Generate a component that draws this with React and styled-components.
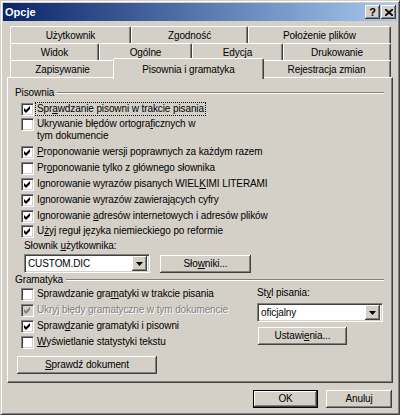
import styled, { createGlobalStyle } from 'styled-components';

const Global = createGlobalStyle`
  html, body { margin: 0; padding: 0; background: #d4d0c8; }
  body {
    font-family: "Liberation Sans", Arial, sans-serif;
    font-size: 10px;
    letter-spacing: -0.1px;
    color: #000;
  }
`;

const Window = styled.div`
  width: 400px;
  height: 415px;
  box-sizing: border-box;
  background: #d4d0c8;
  border: 1px solid;
  border-color: #d4d0c8 #404040 #404040 #d4d0c8;
  box-shadow: inset 1px 1px #fff, inset -1px -1px #808080;
  padding: 2px;
  display: flex;
  flex-direction: column;
`;

const TitleBar = styled.div`
  height: 18px;
  display: flex;
  align-items: center;
  padding: 0 1px 0 2px;
  background: linear-gradient(to right, #0a246a, #a6caf0);
  color: #fff;
  font-weight: bold;
  font-size: 11px;
  letter-spacing: 0;
`;

const TitleText = styled.span`
  flex: 1;
`;

const TitleButton = styled.div`
  width: ${(p) => p.w}px;
  height: 14px;
  margin-left: ${(p) => p.gap || 0}px;
  box-sizing: border-box;
  background: #d4d0c8;
  box-shadow: inset -1px -1px #404040, inset 1px 1px #fff, inset -2px -2px #808080;
  color: #000;
  display: flex;
  align-items: center;
  justify-content: center;
  font-size: 11px;
  font-weight: bold;
  line-height: 14px;
`;

const Body = styled.div`
  padding: 0 4px;
  display: flex;
  flex-direction: column;
`;

const Tabs = styled.div`
  margin: 5px 2px 0 3px;
  display: flex;
  flex-direction: column;
`;

const TabRow = styled.div`
  display: flex;
  height: 17px;
  align-items: flex-start;
`;

const Tab = styled.div`
  position: relative;
  z-index: ${(p) => (p.active ? 2 : 0)};
  box-sizing: border-box;
  width: ${(p) => p.w + (p.active ? 4 : 0)}px;
  height: ${(p) => (p.active ? 21 : 17)}px;
  margin: ${(p) => (p.active ? '-2px -2px 0' : '0')};
  padding-top: ${(p) => (p.active ? 5 : 3)}px;
  background: #d4d0c8;
  border-top: 1px solid #fff;
  border-left: 1px solid #fff;
  border-right: 1px solid #404040;
  border-radius: 2px 2px 0 0;
  box-shadow: inset -1px 0 #808080;
  text-align: center;
  line-height: 12px;
  white-space: nowrap;
`;

const Panel = styled.div`
  height: 306px;
  box-sizing: border-box;
  border: 1px solid;
  border-color: #fff #404040 #404040 #fff;
  box-shadow: inset -1px -1px #808080;
  padding: 0 8px 0 7px;
  display: flex;
  flex-direction: column;
`;

const GroupHeader = styled.div`
  display: flex;
  align-items: center;
  height: 12px;
  line-height: 12px;
  margin-top: ${(p) => p.mt}px;
`;

const GroupLine = styled.div`
  flex: 1;
  margin-left: 3px;
  border-top: 1px solid #808080;
  border-bottom: 1px solid #fff;
`;

const CheckList = styled.div`
  display: flex;
  flex-direction: column;
  padding-left: 6px;
  margin-top: ${(p) => p.mt || 0}px;
`;

const CheckRow = styled.div`
  display: flex;
  align-items: ${(p) => (p.multi ? 'flex-start' : 'center')};
  height: ${(p) => p.h || 16}px;
  padding-top: ${(p) => (p.multi ? 1 : 0)}px;
  box-sizing: border-box;
  color: ${(p) => (p.disabled ? '#808080' : '#000')};
  text-shadow: ${(p) => (p.disabled ? '1px 1px #fff' : 'none')};
`;

const Box = styled.div`
  width: 13px;
  height: 13px;
  flex: none;
  box-sizing: border-box;
  margin-right: 2px;
  background: ${(p) => (p.disabled ? '#d4d0c8' : '#fff')};
  border: 1px solid;
  border-color: #808080 #fff #fff #808080;
  box-shadow: inset 1px 1px #404040, inset -1px -1px #d4d0c8;
  display: flex;
  align-items: center;
  justify-content: center;
  text-shadow: none;
`;

const Label = styled.span`
  line-height: 12px;
  white-space: nowrap;
  padding: 0 1px;
  outline: ${(p) => (p.focus ? '1px dotted #000' : 'none')};
`;

const Key = styled.span`
  text-decoration: underline;
`;

const FieldLabel = styled.div`
  line-height: 12px;
  margin-top: ${(p) => p.mt || 0}px;
  padding-left: ${(p) => p.pl || 0}px;
`;

const FieldRow = styled.div`
  display: flex;
  align-items: center;
  gap: 10px;
  height: 19px;
  margin-top: 2px;
  padding-left: 9px;
`;

const Combo = styled.div`
  width: ${(p) => p.w}px;
  height: 19px;
  margin-top: ${(p) => p.mt || 0}px;
  box-sizing: border-box;
  background: #fff;
  border: 1px solid;
  border-color: #808080 #fff #fff #808080;
  box-shadow: inset 1px 1px #404040, inset -1px -1px #d4d0c8;
  padding: 2px;
  display: flex;
  align-items: center;
`;

const ComboText = styled.span`
  flex: 1;
  line-height: 13px;
  padding-left: 1px;
`;

const ComboArrow = styled.div`
  width: 15px;
  height: 15px;
  box-sizing: border-box;
  background: #d4d0c8;
  box-shadow: inset -1px -1px #404040, inset 1px 1px #fff, inset -2px -2px #808080;
  display: flex;
  align-items: center;
  justify-content: center;
`;

const Button = styled.div`
  width: ${(p) => p.w}px;
  height: 18px;
  margin-top: ${(p) => p.mt || 0}px;
  margin-left: ${(p) => p.ml || 0}px;
  box-sizing: border-box;
  background: #d4d0c8;
  border: ${(p) => (p.primary ? '1px solid #000' : 'none')};
  box-shadow: inset -1px -1px #404040, inset 1px 1px #fff, inset -2px -2px #808080;
  display: flex;
  align-items: center;
  justify-content: center;
  line-height: 12px;
  flex: none;
`;

const Columns = styled.div`
  display: flex;
`;

const LeftCol = styled.div`
  width: 242px;
  display: flex;
  flex-direction: column;
`;

const RightCol = styled.div`
  display: flex;
  flex-direction: column;
`;

const Footer = styled.div`
  display: flex;
  justify-content: flex-end;
  gap: 8px;
  margin-top: 7px;
  padding-right: 1px;
`;

const Check = ({ checked, disabled }) => (
  <Box disabled={disabled}>
    {checked && (
      <svg width="9" height="9" viewBox="0 0 9 9">
        <path d="M1 3 L3 5 L7 1 L7 4 L3 8 L1 6 Z" fill={disabled ? '#808080' : '#000'} />
      </svg>
    )}
  </Box>
);

const Arrow = () => (
  <svg width="7" height="4" viewBox="0 0 7 4">
    <path d="M0 0 H7 L3.5 4 Z" fill="#000" />
  </svg>
);

const tabRows = [
  [
    { t: 'Użytkownik', w: 121 },
    { t: 'Zgodność', w: 117 },
    { t: 'Położenie plików', w: 143 },
  ],
  [
    { t: 'Widok', w: 89 },
    { t: 'Ogólne', w: 93 },
    { t: 'Edycja', w: 91 },
    { t: 'Drukowanie', w: 108 },
  ],
  [
    { t: 'Zapisywanie', w: 105 },
    { t: 'Pisownia i gramatyka', w: 147, active: true },
    { t: 'Rejestracja zmian', w: 129 },
  ],
];

export default function App() {
  return (
    <>
      <Global />
      <Window>
        <TitleBar>
          <TitleText>Opcje</TitleText>
          <TitleButton w={15}>?</TitleButton>
          <TitleButton w={15} gap={1}>
            <svg width="8" height="7" viewBox="0 0 8 7">
              <path d="M0 0 L8 7 M8 0 L0 7" stroke="#000" strokeWidth="1.8" />
            </svg>
          </TitleButton>
        </TitleBar>
        <Body>
          <Tabs>
            {tabRows.map((row, i) => (
              <TabRow key={i}>
                {row.map((tab) => (
                  <Tab key={tab.t} w={tab.w} active={tab.active}>
                    {tab.t}
                  </Tab>
                ))}
              </TabRow>
            ))}
          </Tabs>
          <Panel>
            <GroupHeader mt={9}>
              Pisownia
              <GroupLine />
            </GroupHeader>
            <CheckList mt={2}>
              <CheckRow>
                <Check checked />
                <Label focus>
                  Spr<Key>a</Key>wdzanie pisowni w trakcie pisania
                </Label>
              </CheckRow>
              <CheckRow multi h={27}>
                <Check />
                <Label>
                  Ukrywanie błędów ortogra<Key>f</Key>icznych w
                  <br />
                  tym dokumencie
                </Label>
              </CheckRow>
              <CheckRow>
                <Check checked />
                <Label>
                  <Key>P</Key>roponowanie wersji poprawnych za każdym razem
                </Label>
              </CheckRow>
              <CheckRow>
                <Check />
                <Label>
                  Pr<Key>o</Key>ponowanie tylko z głównego słownika
                </Label>
              </CheckRow>
              <CheckRow>
                <Check checked />
                <Label>
                  Ignorowanie wyrazów pisanych WIEL<Key>K</Key>IMI LITERAMI
                </Label>
              </CheckRow>
              <CheckRow>
                <Check checked />
                <Label>
                  Ignorowanie wyrazów zawiera<Key>j</Key>ących cyfry
                </Label>
              </CheckRow>
              <CheckRow>
                <Check checked />
                <Label>
                  Ignorowanie <Key>a</Key>dresów internetowych i adresów plików
                </Label>
              </CheckRow>
              <CheckRow h={14}>
                <Check checked />
                <Label>
                  U<Key>ż</Key>yj reguł języka niemieckiego po reformie
                </Label>
              </CheckRow>
            </CheckList>
            <FieldLabel mt={2} pl={9}>
              Słownik <Key>u</Key>żytkownika:
            </FieldLabel>
            <FieldRow>
              <Combo w={126}>
                <ComboText>CUSTOM.DIC</ComboText>
                <ComboArrow>
                  <Arrow />
                </ComboArrow>
              </Combo>
              <Button w={91}>
                Sło<Key>w</Key>niki...
              </Button>
            </FieldRow>
            <GroupHeader mt={1}>
              Gramatyka
              <GroupLine />
            </GroupHeader>
            <Columns>
              <LeftCol>
                <CheckList>
                  <CheckRow>
                    <Check />
                    <Label>
                      Sprawdzanie gra<Key>m</Key>atyki w trakcie pisania
                    </Label>
                  </CheckRow>
                  <CheckRow disabled>
                    <Check checked disabled />
                    <Label>Ukryj błędy gramatyczne w tym dokumencie</Label>
                  </CheckRow>
                  <CheckRow>
                    <Check checked />
                    <Label>
                      Spraw<Key>d</Key>zanie gramatyki i pisowni
                    </Label>
                  </CheckRow>
                  <CheckRow>
                    <Check />
                    <Label>
                      <Key>W</Key>yświetlanie statystyki tekstu
                    </Label>
                  </CheckRow>
                </CheckList>
                <Button w={140} mt={6} ml={2}>
                  <span>
                    <Key>S</Key>prawdź dokument
                  </span>
                </Button>
              </LeftCol>
              <RightCol>
                <FieldLabel mt={1}>
                  St<Key>y</Key>l pisania:
                </FieldLabel>
                <Combo w={126} mt={4}>
                  <ComboText>oficjalny</ComboText>
                  <ComboArrow>
                    <Arrow />
                  </ComboArrow>
                </Combo>
                <Button w={89} mt={5} ml={1}>
                  <span>
                    Ustawi<Key>e</Key>nia...
                  </span>
                </Button>
              </RightCol>
            </Columns>
          </Panel>
          <Footer>
            <Button w={65} primary>
              OK
            </Button>
            <Button w={66}>Anuluj</Button>
          </Footer>
        </Body>
      </Window>
    </>
  );
}
